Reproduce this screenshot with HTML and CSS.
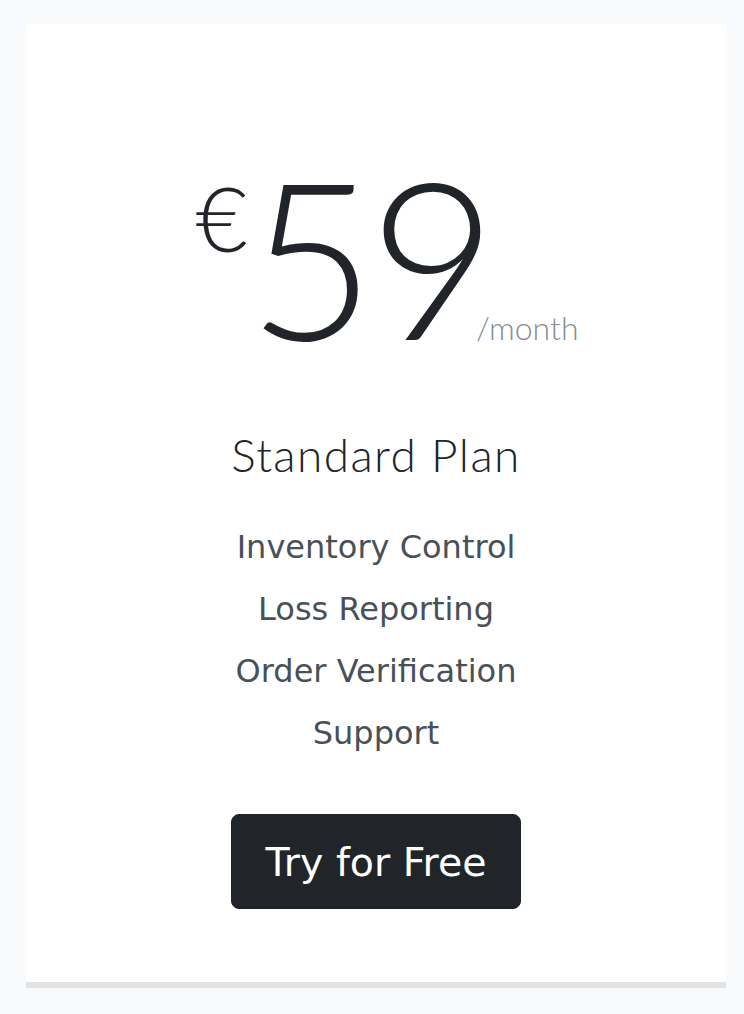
FILE: index.html
```html
<!DOCTYPE html>
<html lang="en">
<head>
<meta charset="utf-8">
<title>Standard Plan</title>
<link rel="stylesheet" href="styles.css">
</head>
<body>
<main class="page">
  <section class="card">
    <div class="price">
      <span class="currency">€</span>
      <span class="amount">59</span>
      <span class="period">/month</span>
    </div>
    <h2 class="plan">Standard Plan</h2>
    <ul class="features">
      <li>Inventory Control</li>
      <li>Loss Reporting</li>
      <li>Order Verification</li>
      <li>Support</li>
    </ul>
    <a class="btn" href="#">Try for Free</a>
  </section>
</main>
</body>
</html>
```

FILE: styles.css
```css
html, body {
  margin: 0;
  padding: 0;
  background: #f8f9fa;
}

.page {
  padding: 24px 18px 26px 26px;
}

.card {
  background: #fff;
  border-bottom: 6px solid #e2e3e5;
  height: 964px;
  box-sizing: border-box;
  padding-top: 121px;
  display: flex;
  flex-direction: column;
  align-items: center;
  text-align: center;
}

.price {
  display: flex;
  justify-content: center;
  align-items: baseline;
  font-family: Lato, "Liberation Sans", sans-serif;
  font-weight: 300;
  color: #212529;
  line-height: 1;
  margin-left: 22px;
}

.currency {
  font-size: 90px;
  align-self: flex-start;
  margin-top: 27px;
  margin-right: 0;
}

.amount {
  font-size: 220px;
  letter-spacing: -6px;
}

.period {
  font-size: 32px;
  color: #878d93;
  margin-left: -15px;
}

.plan {
  margin: 62px 0 0;
  font-family: Lato, "Liberation Sans", sans-serif;
  font-weight: 300;
  font-size: 46px;
  letter-spacing: 1.4px;
  line-height: 1.2;
  color: #212529;
}

.features {
  list-style: none;
  margin: 34px 0 0;
  padding: 0;
  font-family: "DejaVu Sans", sans-serif;
  font-size: 32px;
  line-height: 62px;
  color: #495057;
}

.btn {
  margin-top: 50px;
  display: inline-block;
  background: #212529;
  border: 1px solid #212529;
  border-radius: 8px;
  color: #fff;
  text-decoration: none;
  font-family: "DejaVu Sans", sans-serif;
  font-size: 39.5px;
  line-height: 44px;
  padding: 25px 33px 24px;
}
```
